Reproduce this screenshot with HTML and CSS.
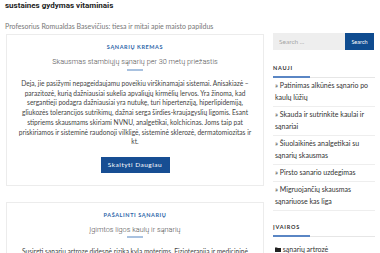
FILE: index.html
```html
<!DOCTYPE html>
<html lang="lt">
<head>
<meta charset="utf-8">
<link rel="stylesheet" href="styles.css">
</head>
<body>
<div class="page">
  <main class="main">
    <div class="prev">
      <p class="prev-title">sustaines gydymas vitaminais</p>
      <p class="prev-link">Profesorius Romualdas Basevičius: tiesa ir mitai apie maisto papildus</p>
    </div>
    <article class="card">
      <div class="cat">SĄNARIŲ KREMAS</div>
      <h2 class="card-title">Skausmas stambiųjų sąnarių per 30 metų priežastis</h2>
      <div class="sep"></div>
      <p class="excerpt">Deja, jie pasižymi nepageidaujamu poveikiu virškinamajai sistemai. Anisakiazė – parazitozė, kurią dažniausiai sukelia apvaliųjų kirmėlių lervos. Yra žinoma, kad sergantieji podagra dažniausiai yra nutukę, turi hipertenziją, hiperlipidemiją, gliukozės tolerancijos sutrikimų, dažnai serga širdies-kraujagyslių ligomis. Esant stipriems skausmams skiriami NVNU, analgetikai, kolchicinas. Joms taip pat priskiriamos ir sisteminė raudonoji vilkligė, sisteminė sklerozė, dermatomiozitas ir kt.</p>
      <div class="more-wrap"><a class="more">Skaityti Daugiau</a></div>
    </article>
    <article class="card">
      <div class="cat">PAŠALINTI SĄNARIŲ</div>
      <h2 class="card-title">Įgimtos ligos kaulų ir sąnarių</h2>
      <div class="sep"></div>
      <p class="excerpt">Susirgti sąnarių artroze didesnė rizika kyla moterims. Fizioterapija ir medicininė mankšta padeda sumažinti skausmą ir pagerinti sąnarių judrumą bei gyvenimo kokybę.</p>
    </article>
  </main>
  <aside class="side">
    <form class="search">
      <input class="search-input" type="text" placeholder="Search ...">
      <button class="search-btn" type="button">Search</button>
    </form>
    <section class="widget">
      <h3 class="widget-title">NAUJI</h3>
      <ul class="posts">
        <li>» Patinimas alkūnės sąnario po kaulų lūžių</li>
        <li>» Skauda ir sutrinkite kaulai ir sąnariai</li>
        <li>» Šiuolaikinės analgetikai su sąnarių skausmas</li>
        <li>» Pirsto sanario uzdegimas</li>
        <li>» Migruojančių skausmas sąnariuose kas liga</li>
      </ul>
    </section>
    <section class="widget">
      <h3 class="widget-title">ĮVAIROS</h3>
      <ul class="cats">
        <li><svg class="folder" viewBox="0 0 10 8" width="6" height="5"><path d="M0 0.5h3.5l1 1H10V8H0z" fill="#222"/></svg> sąnarių artrozė</li>
      </ul>
    </section>
  </aside>
</div>
</body>
</html>
```

FILE: styles.css
```css
html, body {
  margin: 0;
  padding: 0;
  background: #fff;
  overflow: hidden;
}
body {
  font-family: Lato, "Noto Sans", sans-serif;
  color: #444;
}
.page {
  display: flex;
  gap: 9px;
  padding: 0 5px 0 6px;
  width: 380px;
  box-sizing: border-box;
}
.main {
  width: 258px;
  flex: none;
}
.prev {
  margin-left: -1px;
  margin-bottom: 3px;
}
.prev-title {
  margin: 0;
  font-family: Roboto, sans-serif;
  font-weight: 700;
  font-size: 8px;
  line-height: 11px;
  color: #222;
}
.prev-link {
  margin: 10px 0 0;
  font-size: 7px;
  line-height: 10px;
  color: #777;
}
.card {
  border: 1px solid #ececec;
  padding: 8px 11px 12px;
  text-align: center;
  margin-bottom: 16px;
}
.cat {
  font-size: 5.5px;
  line-height: 8px;
  font-weight: 700;
  letter-spacing: 0.6px;
  color: #2d66a8;
}
.card-title {
  margin: 5px 0 0;
  font-family: Roboto, sans-serif;
  font-weight: 300;
  font-size: 7.3px;
  line-height: 11px;
  color: #4f4f4f;
}
.sep {
  width: 16px;
  height: 2px;
  background: #a9c2e0;
  margin: 1.5px auto 0;
}
.excerpt {
  margin: 8.5px 0 0;
  font-size: 6.6px;
  line-height: 9.7px;
  color: #444;
}
.more-wrap {
  margin-top: 10px;
  line-height: 0;
}
.more {
  display: inline-block;
  width: 69px;
  height: 16px;
  line-height: 16px;
  background: #174e93;
  color: #fff;
  font-size: 6.5px;
  letter-spacing: 0.5px;
  text-decoration: none;
}
.side {
  width: 102px;
  flex: none;
  padding-top: 33px;
}
.search {
  display: flex;
  height: 17px;
  margin: 0;
}
.search-input {
  width: 72px;
  flex: none;
  box-sizing: border-box;
  border: 0;
  background: #eee;
  padding: 0 6px;
  font-family: Lato, sans-serif;
  font-size: 6.5px;
  color: #999;
  outline: none;
}
.search-input::placeholder {
  color: #a5a5a5;
}
.search-btn {
  width: 29px;
  flex: none;
  border: 0;
  padding: 0;
  background: #0f4c90;
  color: #fff;
  font-family: Lato, sans-serif;
  font-size: 5.5px;
}
.widget-title {
  position: relative;
  margin: 14px 0 0;
  font-size: 5.5px;
  line-height: 8px;
  font-weight: 700;
  letter-spacing: 0.8px;
  color: #333;
  padding-bottom: 5px;
  border-bottom: 1px solid #e6e6e6;
}
.widget-title::after {
  content: "";
  position: absolute;
  left: 0;
  bottom: -1px;
  width: 37px;
  height: 2px;
  background: #5a86c4;
}
.posts, .cats {
  list-style: none;
  margin: 0;
  padding: 0;
}
.posts li {
  font-size: 7px;
  line-height: 12.3px;
  padding: 1px 0 2.5px 2px;
  border-bottom: 1px solid #eee;
  color: #333;
}
.widget + .widget .widget-title {
  margin-top: 12px;
}
.cats li {
  font-size: 7px;
  line-height: 12px;
  padding: 5.5px 0 0 2px;
  color: #333;
}
.folder {
  vertical-align: 0;
}
```
